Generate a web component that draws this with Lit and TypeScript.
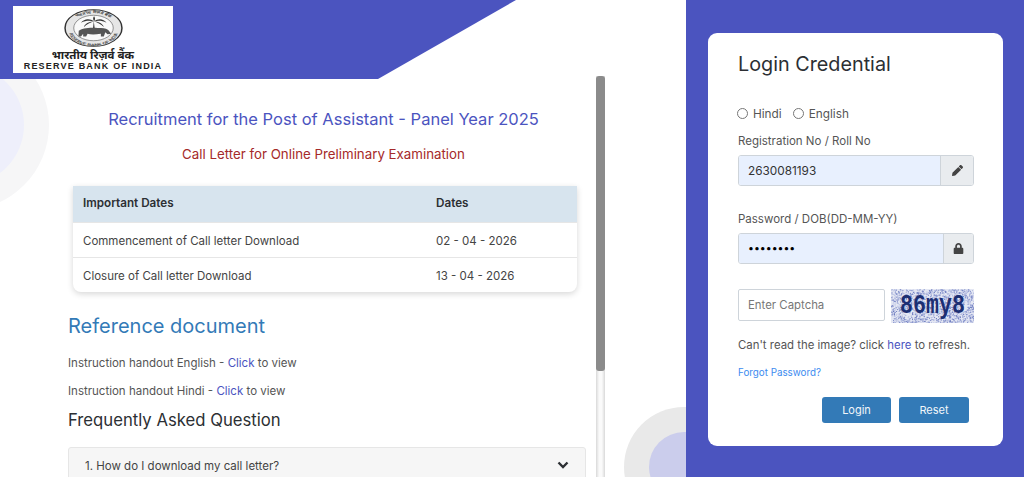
import { LitElement, html, css, svg } from "lit";
import { customElement } from "lit/decorators.js";

function captchaNoise() {
  let seed = 12345;
  const rnd = () => {
    seed = (seed * 1103515245 + 12345) & 0x7fffffff;
    return seed / 0x7fffffff;
  };
  const out = [];
  for (let i = 0; i < 1500; i++) {
    const x = rnd() * 83;
    const y = rnd() * 34;
    const c = rnd() > 0.55 ? "#6d7cc0" : "#b4bde0";
    out.push(svg`<rect x=${x.toFixed(1)} y=${y.toFixed(1)} width="1" height="1" fill=${c}></rect>`);
  }
  return out;
}

@customElement("app-root")
export class AppRoot extends LitElement {
  static styles = css`
    :host {
      display: block;
      width: 1024px;
      height: 477px;
      overflow: hidden;
      font-family: Inter, "Liberation Sans", sans-serif;
      color: #444;
      background: #fff;
    }
    * { box-sizing: border-box; }
    .page { display: flex; width: 1024px; height: 477px; position: relative; overflow: hidden; }
    .left { width: 686px; height: 477px; flex: none; position: relative; overflow: hidden; }
    .circle { position: absolute; border-radius: 50%; }
    .c1 { left: -121px; top: 40px; width: 170px; height: 170px; background: #f6f6f7; }
    .c2 { left: -96px; top: 65px; width: 120px; height: 120px; background: #eeeffb; }
    .c3 { left: 624px; top: 407px; width: 120px; height: 120px; background: #e9e9e9; }
    .c4 { left: 649px; top: 432px; width: 70px; height: 70px; background: #cbcdec; }
    .banner {
      position: relative;
      height: 79px;
      width: 516px;
      background: #4b54bf;
      clip-path: polygon(0 0, 100% 0, 378px 100%, 0 100%);
      padding: 6px 0 0 13px;
    }
    .logo {
      width: 160px;
      height: 67px;
      background: #fff;
      display: flex;
      flex-direction: column;
      align-items: center;
    }
    .seal { width: 59px; height: 38px; margin-top: 3px; flex: none; }
    .seal-t { font-family: "Liberation Sans", sans-serif; font-size: 3.6px; font-weight: 700; fill: #444; }
    .logo-hi { font-size: 11.5px; line-height: 12px; font-weight: 700; color: #222; font-family: "Noto Sans", "Noto Sans Devanagari", sans-serif; margin-top: 2px; white-space: nowrap; }
    .logo-en { font-family: "Liberation Sans", sans-serif; font-size: 9px; line-height: 9px; font-weight: 700; color: #222; letter-spacing: 1.2px; margin-top: 1px; white-space: nowrap; }
    .body { position: relative; display: flex; margin-top: -3px; height: 401px; }
    .content { width: 596px; flex: none; padding: 31px 10px 0 68px; }
    .title { margin: 0 7px 0 0; font-size: 16.5px; line-height: 24px; font-weight: 400; color: #4b54bf; text-align: center; }
    .sub { margin: 13px 7px 0 0; font-size: 13.3px; line-height: 20px; font-weight: 400; color: #a52a2a; text-align: center; }
    .table { margin: 22px 9px 0 5px; border-radius: 0 0 8px 8px; box-shadow: 0 2px 6px rgba(0,0,0,.16); font-size: 11.5px; }
    .row { display: flex; align-items: center; height: 35px; padding: 1px 0 0 10px; border-top: 1px solid #e6e6e6; color: #444; }
    .row.head { height: 36px; padding: 0 0 2px 10px; background: #d7e4ee; font-size: 11.7px; font-weight: 600; color: #2c2f33; border-top: none; }
    .c-a { width: 353px; }
    h2 { margin: 22px 0 0; font-size: 20px; line-height: 24px; font-weight: 400; color: #337ab7; }
    .doc { margin: 0; font-size: 11.5px; line-height: 16px; color: #555; }
    .doc a { color: #4b54bf; text-decoration: none; }
    .doc1 { margin-top: 17px; }
    .doc2 { margin-top: 12px; }
    h3 { margin: 10px 0 0; font-size: 16.7px; line-height: 22px; font-weight: 400; color: #2c2f33; }
    .faq {
      margin-top: 16px;
      height: 60px;
      background: #f6f6f6;
      border: 1px solid #e6e6e6;
      border-radius: 3px;
      display: flex;
      justify-content: space-between;
      padding: 10px 16px 0;
      font-size: 11.5px;
      line-height: 16px;
      color: #444;
    }
    .chev { width: 12px; height: 10px; margin-top: 2px; }
    .track {
      width: 9px;
      flex: none;
      background: linear-gradient(90deg, #d9d9d9, #fafafa 35%, #fafafa 65%, #d9d9d9);
    }
    .thumb { height: 295px; background: #8b8b8b; border-radius: 3px; }
    .right {
      position: relative;
      width: 338px;
      flex: none;
      background: #4b54bf;
      padding: 33px 21px 0 22px;
    }
    .card {
      height: 413px;
      background: #fff;
      border-radius: 9px;
      padding: 18px 29px 0 30px;
    }
    .card h1 { margin: 0; font-size: 19.8px; line-height: 27px; font-weight: 400; color: #2c2f33; }
    .radios { display: flex; align-items: center; margin-top: 28px; font-size: 11.8px; line-height: 16px; color: #555; }
    .radios input { width: 11px; height: 11px; margin: 0 5px 2px -1px; accent-color: #4b54bf; }
    .radios label { display: flex; align-items: center; margin-right: 12px; }
    .lab { font-size: 11.5px; line-height: 16px; color: #555; }
    .l1 { margin-top: 11px; }
    .l2 { margin-top: 25px; }
    .group { display: flex; height: 31px; margin-top: 6px; border: 1px solid #ced4da; border-radius: 3px; overflow: hidden; }
    .group input {
      flex: 1;
      min-width: 0;
      border: none;
      outline: none;
      background: #e8f0fe;
      padding: 0 9px;
      font: 11.8px Inter, sans-serif;
      color: #333;
    }
    .group input[type="password"] { font-size: 10.5px; color: #000; }
    .addon { display: flex; align-items: center; justify-content: center; background: #e9ecef; border-left: 1px solid #ced4da; }
    .a1 { width: 33px; }
    .a2 { width: 30px; }
    .addon svg { width: 11px; height: 11px; fill: #444; }
    .cap-row { display: flex; justify-content: space-between; margin-top: 25px; }
    .cap-input {
      width: 147px;
      height: 32px;
      border: 1px solid #ced4da;
      border-radius: 2px;
      padding: 0 9px;
      font: 11.4px Inter, sans-serif;
      outline: none;
    }
    .cap-input::placeholder { color: #777; }
    .cap-img { width: 83px; height: 34px; position: relative; background: #e4e7f3; overflow: hidden; }
    .cap-img svg { display: block; }
    .cap-text {
      position: absolute;
      inset: 0;
      display: flex;
      align-items: center;
      justify-content: center;
      font-family: "Liberation Mono", monospace;
      font-weight: 700;
      font-size: 27px;
      color: #1c2f73;
      transform: scaleX(.8);
    }
    .refresh { margin: 14px 0 0; font-size: 11.4px; line-height: 17px; color: #555; white-space: nowrap; }
    .refresh a { color: #4b54bf; text-decoration: none; }
    .forgot { display: block; margin-top: 12px; font-size: 9.8px; line-height: 14px; color: #3b8bf0; text-decoration: none; }
    .btns { display: flex; gap: 8px; margin: 17px 5px 0 84px; }
    button {
      width: 69px;
      height: 26px;
      border: none;
      border-radius: 3px;
      background: #337ab7;
      color: #f2f6fa;
      font: 11px Inter, sans-serif;
      padding: 0;
    }
    button + button { width: 70px; }
  `;

  render() {
    return html`
      <div class="page">
        <div class="left">
          <div class="circle c1"></div>
          <div class="circle c2"></div>
          <div class="circle c3"></div>
          <div class="circle c4"></div>
          <div class="banner">
            <div class="logo">
              <svg class="seal" viewBox="0 0 40 40" preserveAspectRatio="none">
                <defs>
                  <path id="arcTop" d="M4.5 20 A15.5 15.5 0 0 1 35.5 20"></path>
                  <path id="arcBot" d="M3 22 A17 17 0 0 0 37 22"></path>
                </defs>
                <circle cx="20" cy="20" r="19.3" fill="#e6e6e6" stroke="#333" stroke-width="1"></circle>
                <circle cx="20" cy="20" r="13.4" fill="#f9f9f9" stroke="#555" stroke-width=".5"></circle>
                <text class="seal-t"><textPath href="#arcTop" startOffset="50%" text-anchor="middle">भारतीय रिज़र्व बैंक</textPath></text>
                <text class="seal-t"><textPath href="#arcBot" startOffset="50%" text-anchor="middle">RESERVE BANK OF INDIA</textPath></text>
                <path d="M19.5 23 L20.2 13 L21 23Z M20.4 13 C17.5 9.5 13.5 10 11.5 14.5 C14.5 12 17.5 12 20.4 13 C17.5 13.2 14.5 15 13.5 19 C15.5 16 18 14.5 20.4 13 C23 9.5 27 10 28.8 14.5 C26 12 23 12 20.4 13 C23 13.2 26 15 27 19 C25 16 22.5 14.5 20.4 13 C19.5 10.5 19.6 9 20.4 7.5 C21.2 9 21.3 11 20.4 13Z" fill="#333"></path>
                <path d="M10 23 C12 20 18 19 23 20 C26 20 28 20 30 22 L32 26 L29.5 26.5 L28 24.5 L27 29 L25 29 L25 26 C21 27 18 27 16 26 L15 29 L13 29 L13 26 L11.5 29 L9.8 29 Z" fill="#555"></path>
              </svg>
              <div class="logo-hi">भारतीय रिज़र्व बैंक</div>
              <div class="logo-en">RESERVE BANK OF INDIA</div>
            </div>
          </div>
          <div class="body">
            <div class="content">
              <p class="title">Recruitment for the Post of Assistant - Panel Year 2025</p>
              <p class="sub">Call Letter for Online Preliminary Examination</p>
              <div class="table">
                <div class="row head"><span class="c-a">Important Dates</span><span>Dates</span></div>
                <div class="row"><span class="c-a">Commencement of Call letter Download</span><span>02 - 04 - 2026</span></div>
                <div class="row"><span class="c-a">Closure of Call letter Download</span><span>13 - 04 - 2026</span></div>
              </div>
              <h2>Reference document</h2>
              <p class="doc doc1">Instruction handout English - <a href="#">Click</a> to view</p>
              <p class="doc doc2">Instruction handout Hindi - <a href="#">Click</a> to view</p>
              <h3>Frequently Asked Question</h3>
              <div class="faq">
                <span>1. How do I download my call letter?</span>
                <svg class="chev" viewBox="0 0 12 10"><path d="M1.5 2.5 L6 7 L10.5 2.5" fill="none" stroke="#2c2f33" stroke-width="2.4"></path></svg>
              </div>
            </div>
            <div class="track"><div class="thumb"></div></div>
          </div>
        </div>
        <div class="right">
          <div class="card">
            <h1>Login Credential</h1>
            <div class="radios">
              <label><input type="radio" name="lang" />Hindi</label>
              <label><input type="radio" name="lang" />English</label>
            </div>
            <div class="lab l1">Registration No / Roll No</div>
            <div class="group">
              <input type="text" .value=${"2630081193"} />
              <div class="addon a1">
                <svg viewBox="0 0 512 512"><path d="M497.9 142.1l-46.1 46.1c-4.7 4.7-12.3 4.7-17 0l-111-111c-4.7-4.7-4.7-12.3 0-17l46.1-46.1c18.7-18.7 49.1-18.7 67.9 0l60.1 60.1c18.8 18.7 18.8 49.1 0 67.9zM284.2 99.8L21.6 362.4.4 483.9c-2.9 16.4 11.4 30.6 27.8 27.8l121.5-21.3 262.6-262.6c4.7-4.7 4.7-12.3 0-17l-111-111c-4.8-4.7-12.4-4.7-17.1 0z"></path></svg>
              </div>
            </div>
            <div class="lab l2">Password / DOB(DD-MM-YY)</div>
            <div class="group">
              <input type="password" .value=${"12345678"} />
              <div class="addon a2">
                <svg viewBox="0 0 448 512"><path d="M400 224h-24v-72C376 68.2 307.8 0 224 0S72 68.2 72 152v72H48c-26.5 0-48 21.5-48 48v192c0 26.5 21.5 48 48 48h352c26.5 0 48-21.5 48-48V272c0-26.5-21.5-48-48-48zm-104 0H152v-72c0-39.7 32.3-72 72-72s72 32.3 72 72v72z"></path></svg>
              </div>
            </div>
            <div class="cap-row">
              <input class="cap-input" placeholder="Enter Captcha" />
              <div class="cap-img">
                <svg width="83" height="34" viewBox="0 0 83 34">${captchaNoise()}</svg>
                <div class="cap-text">86my8</div>
              </div>
            </div>
            <p class="refresh">Can't read the image? click <a href="#">here</a> to refresh.</p>
            <a class="forgot" href="#">Forgot Password?</a>
            <div class="btns"><button>Login</button><button>Reset</button></div>
          </div>
        </div>
      </div>
    `;
  }
}
